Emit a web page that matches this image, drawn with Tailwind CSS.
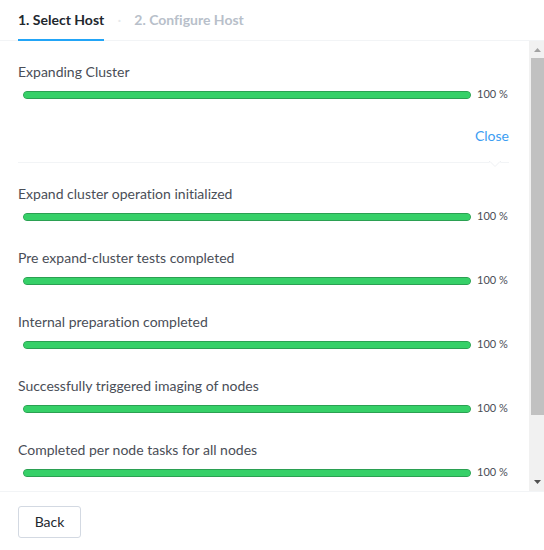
<!DOCTYPE html>
<html lang="en">
<head>
<meta charset="utf-8">
<meta name="viewport" content="width=device-width, initial-scale=1">
<title>Expand Cluster</title>
<script src="https://cdn.jsdelivr.net/npm/@tailwindcss/browser@4"></script>
</head>
<body class="flex h-screen flex-col bg-white font-['Lato','Open_Sans',sans-serif] text-sm text-[#4a4e57] [font-variant-ligatures:none]">
  <header class="shrink-0 border-b border-[#f2f4f6]">
    <nav class="-mb-px flex px-[18px] font-bold" aria-label="Steps">
      <a href="#select" aria-current="step" class="border-b-2 border-[#22a5f7] pt-[10px] pb-[9px] leading-5 text-[#22272e]">1. Select Host</a>
      <span class="w-[30px] pt-[10px] text-center text-xs leading-5 text-[#e6e9ec]" aria-hidden="true">·</span>
      <a href="#configure" class="pt-[10px] pb-[9px] leading-5 text-[#b8bfca]">2. Configure Host</a>
    </nav>
  </header>

  <div class="flex min-h-0 flex-1">
    <main class="min-w-0 flex-1 overflow-y-auto pt-[21px] pr-5 pl-[18px] [scrollbar-width:none]">
      <section class="flex flex-col gap-[3px]">
        <label for="p0" class="leading-5">Expanding Cluster</label>
        <div class="flex items-center gap-[6px] pl-[5px]">
          <progress id="p0" value="100" max="100" class="h-2 min-w-0 flex-1 appearance-none rounded-full border border-[#2ba052] bg-[#36d068] [&::-webkit-progress-bar]:bg-transparent [&::-webkit-progress-value]:rounded-full [&::-webkit-progress-value]:bg-[#36d068]"></progress>
          <span class="w-8 pb-[2px] text-[11px] leading-[18px] whitespace-nowrap">100 %</span>
        </div>
      </section>
      <div class="relative flex justify-end border-b border-[#f2f4f6] pt-[21px] pb-4">
        <button type="button" class="cursor-pointer leading-5 text-[#3c9df2]">Close</button>
        <svg class="absolute right-2 -bottom-[6px]" width="12" height="7" viewBox="0 0 12 7" fill="none" aria-hidden="true"><path d="M0 0H12V1L6 6L0 1Z" fill="#fff"/><path d="M0 .5H1L6 5.5L11 .5H12" stroke="#eef0f3"/></svg>
      </div>
      <ul class="flex flex-col gap-[21px] pt-[21px] pb-24">
        <li class="flex flex-col gap-[3px]">
          <label for="p1" class="leading-5">Expand cluster operation initialized</label>
          <div class="flex items-center gap-[6px] pl-[5px]">
            <progress id="p1" value="100" max="100" class="h-2 min-w-0 flex-1 appearance-none rounded-full border border-[#2ba052] bg-[#36d068] [&::-webkit-progress-bar]:bg-transparent [&::-webkit-progress-value]:rounded-full [&::-webkit-progress-value]:bg-[#36d068]"></progress>
            <span class="w-8 pb-[2px] text-[11px] leading-[18px] whitespace-nowrap">100 %</span>
          </div>
        </li>
        <li class="flex flex-col gap-[3px]">
          <label for="p2" class="leading-5">Pre expand-cluster tests completed</label>
          <div class="flex items-center gap-[6px] pl-[5px]">
            <progress id="p2" value="100" max="100" class="h-2 min-w-0 flex-1 appearance-none rounded-full border border-[#2ba052] bg-[#36d068] [&::-webkit-progress-bar]:bg-transparent [&::-webkit-progress-value]:rounded-full [&::-webkit-progress-value]:bg-[#36d068]"></progress>
            <span class="w-8 pb-[2px] text-[11px] leading-[18px] whitespace-nowrap">100 %</span>
          </div>
        </li>
        <li class="flex flex-col gap-[3px]">
          <label for="p3" class="leading-5">Internal preparation completed</label>
          <div class="flex items-center gap-[6px] pl-[5px]">
            <progress id="p3" value="100" max="100" class="h-2 min-w-0 flex-1 appearance-none rounded-full border border-[#2ba052] bg-[#36d068] [&::-webkit-progress-bar]:bg-transparent [&::-webkit-progress-value]:rounded-full [&::-webkit-progress-value]:bg-[#36d068]"></progress>
            <span class="w-8 pb-[2px] text-[11px] leading-[18px] whitespace-nowrap">100 %</span>
          </div>
        </li>
        <li class="flex flex-col gap-[3px]">
          <label for="p4" class="leading-5">Successfully triggered imaging of nodes</label>
          <div class="flex items-center gap-[6px] pl-[5px]">
            <progress id="p4" value="100" max="100" class="h-2 min-w-0 flex-1 appearance-none rounded-full border border-[#2ba052] bg-[#36d068] [&::-webkit-progress-bar]:bg-transparent [&::-webkit-progress-value]:rounded-full [&::-webkit-progress-value]:bg-[#36d068]"></progress>
            <span class="w-8 pb-[2px] text-[11px] leading-[18px] whitespace-nowrap">100 %</span>
          </div>
        </li>
        <li class="flex flex-col gap-[3px]">
          <label for="p5" class="leading-5">Completed per node tasks for all nodes</label>
          <div class="flex items-center gap-[6px] pl-[5px]">
            <progress id="p5" value="100" max="100" class="h-2 min-w-0 flex-1 appearance-none rounded-full border border-[#2ba052] bg-[#36d068] [&::-webkit-progress-bar]:bg-transparent [&::-webkit-progress-value]:rounded-full [&::-webkit-progress-value]:bg-[#36d068]"></progress>
            <span class="w-8 pb-[2px] text-[11px] leading-[18px] whitespace-nowrap">100 %</span>
          </div>
        </li>
      </ul>
    </main>
    <div class="flex w-[15px] shrink-0 flex-col bg-[#f1f1f1] pl-[2px]" aria-hidden="true">
      <svg class="shrink-0" width="13" height="17" viewBox="0 0 13 17"><path d="M3 11L6.500 7L10 11Z" fill="#a3a3a3"/></svg>
      <div class="flex min-h-0 flex-1 flex-col">
        <div class="h-6/7 bg-[#c1c1c1]"></div>
      </div>
      <svg class="shrink-0" width="13" height="17" viewBox="0 0 13 17"><path d="M3 6L6.500 10L10 6Z" fill="#505050"/></svg>
    </div>
  </div>

  <footer class="shrink-0 border-t border-[#f2f4f6] px-[18px] pt-[14px] pb-3">
    <button type="button" class="min-w-[63px] cursor-pointer rounded-[3px] border border-[#d3d9e2] bg-white px-[15px] py-[5px] leading-5 text-[#22272e]">Back</button>
  </footer>
</body>
</html>
